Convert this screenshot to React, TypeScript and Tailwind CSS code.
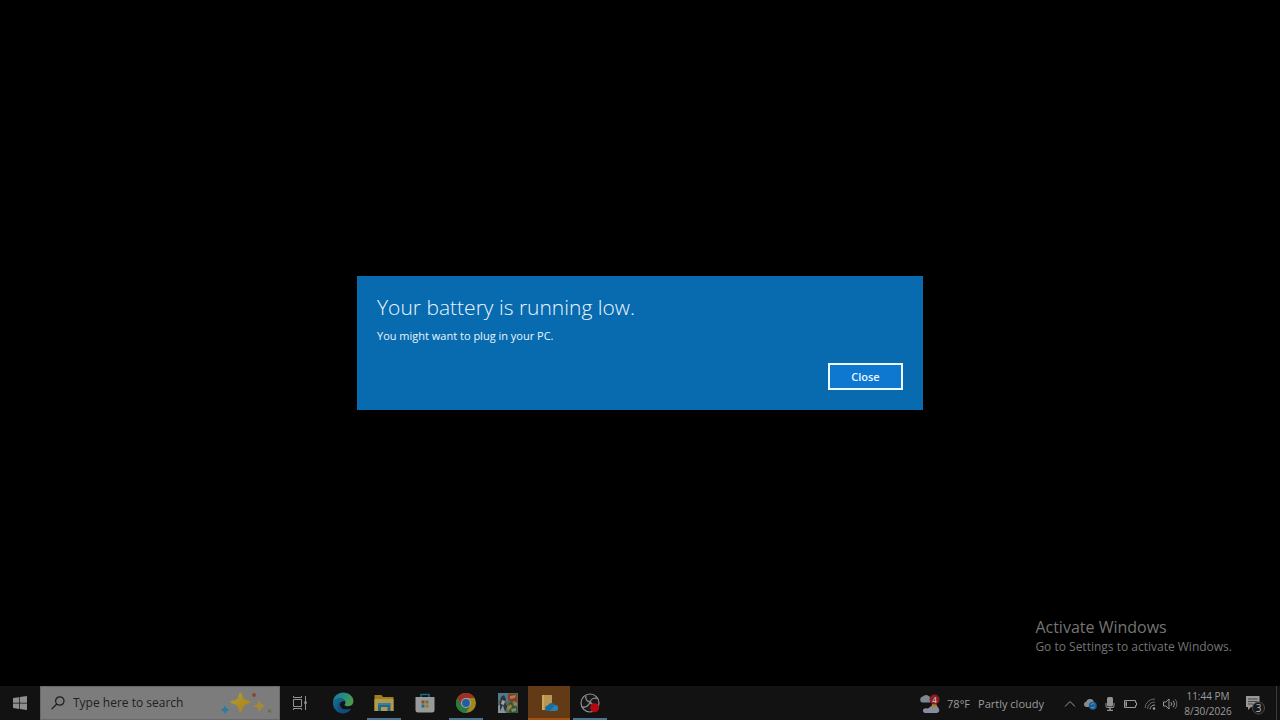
import type { ReactNode } from 'react';

function StartIcon() {
  return (
    <svg viewBox="0 0 14 14" className="h-3.5 w-3.5" fill="#8e8e8e">
      <path d="M0 2.1 6.1 1.2V6.7H0zM6.8 1.1 14 0V6.7H6.8zM0 7.4H6.1V12.9L0 12zM6.8 7.4H14V14L6.8 13z" />
    </svg>
  );
}

function SearchIcon() {
  return (
    <svg viewBox="0 0 14 14" className="h-3.5 w-3.5 shrink-0" fill="none" stroke="#1a1a1a" strokeWidth="1.2">
      <circle cx="8.8" cy="5" r="4.2" />
      <path d="M5.8 8 .6 13.2" />
    </svg>
  );
}

function Sparkles() {
  return (
    <svg viewBox="0 0 52 24" className="h-6 w-[52px] shrink-0">
      <defs>
        <linearGradient id="gold" x1="0" y1="0" x2="1" y2="1">
          <stop offset="0" stopColor="#b39a3a" />
          <stop offset="1" stopColor="#a8850c" />
        </linearGradient>
      </defs>
      <path d="M19.500 1.500c1.800 0 1.800 5 3.500 6.500s6.500 1.500 6.500 3.200-4.800 1.700-6.500 3.200-1.700 6.600-3.500 6.600-1.800-5.100-3.500-6.600-6.500-1.500-6.500-3.200 4.800-1.700 6.500-3.200 1.700-6.500 3.500-6.500Z" fill="url(#gold)" />
      <path d="M38.500 9.500c1 0 1 2.700 1.900 3.500s3.300 1 3.300 2-2.400 1.200-3.300 2-.9 3.500-1.900 3.500-1-2.700-1.900-3.500-3.300-1-3.300-2 2.400-1.200 3.300-2 .9-3.500 1.900-3.500Z" fill="#a38a35" />
      <path d="M4 15c.8 0 .9 1.700 1.600 2.300s2.400.7 2.400 1.500-1.700.9-2.400 1.500S4.800 22.500 4 22.500s-.9-1.600-1.600-2.200S0 19.600 0 18.800s1.700-.9 2.400-1.500S3.200 15 4 15Z" fill="#257d9f" />
      <circle cx="33" cy="4" r="1.900" fill="#8c452c" />
      <circle cx="48.500" cy="20" r="1.800" fill="#6c7048" />
    </svg>
  );
}

function TaskViewIcon() {
  return (
    <svg viewBox="0 0 14 14" className="h-3.5 w-3.5" fill="none" stroke="#929292" strokeWidth="1">
      <path d="M.5 3.500h8v7h-8zM.5 0v1.500h8V0M.5 14v-1.500h8V14M12.500 0v14" />
      <path d="M11.200 5.500h2.600v2.300h-2.600z" fill="#929292" stroke="none" />
    </svg>
  );
}

function EdgeIcon() {
  return (
    <svg viewBox="0 0 22 22" className="h-[22px] w-[22px]">
      <defs>
        <linearGradient id="edgeTop" x1="0" y1="0" x2="1" y2="0.500">
          <stop offset="0" stopColor="#1c7791" />
          <stop offset="0.500" stopColor="#248b88" />
          <stop offset="1" stopColor="#4b9b4b" />
        </linearGradient>
        <linearGradient id="edgeLow" x1="0" y1="0" x2="1" y2="1">
          <stop offset="0" stopColor="#167097" />
          <stop offset="1" stopColor="#123f70" />
        </linearGradient>
      </defs>
      <path d="M1 10C1.500 4 6 .6 11.200.6c6 0 10.200 4.200 10.200 8.500 0 3.400-2.500 5.200-5.300 5.200-2.200 0-3.600-.8-3.600-1.600 0-.5.9-.9.900-2.300 0-1.900-2.200-3.900-5.400-3.900C4.800 6.500 2.200 8 1 10Z" fill="url(#edgeTop)" />
      <path d="M1 10c1.100-2.200 3.900-3.700 7.100-3.500 2.900.2 4.400 1.600 4.900 2.900-4-1-5.500 2-4.800 4.500.9 3.300 5 4.800 10.900 2.800-1.700 2.900-4.700 4.700-8.100 4.700C5.300 21.400.4 16.400 1 10Z" fill="url(#edgeLow)" />
      <path d="M8.200 13.900c.9 3.300 5 4.800 10.900 2.800-2.600 3.400-6.300 4.300-9 3.500-3.800-1-5.500-5.200-3.600-8.900.5-1 1.200-1.800 2.300-2.200-.9 1.600-1 3.200-.6 4.800Z" fill="#124b80" />
    </svg>
  );
}

function ExplorerIcon() {
  return (
    <svg viewBox="0 0 20 18" className="h-[18px] w-5">
      <path d="M.5 1h7l1.500 2h10.500v14H.5z" fill="#a27d20" />
      <path d="M.5 5h19v12H.5z" fill="#b39a4b" />
      <path d="M4 9h12.500v8h-3v-4H7v4H4z" fill="#23688d" />
      <path d="M4 9h12.500v2H4z" fill="#3480a5" />
    </svg>
  );
}

function StoreIcon() {
  return (
    <svg viewBox="0 0 20 20" className="h-5 w-5">
      <path d="M6 5V1.500h8V5" fill="none" stroke="#1b6c81" strokeWidth="1.500" />
      <path d="M.5 4h19v13a2.500 2.500 0 0 1-2.500 2.500H3A2.500 2.500 0 0 1 .5 17z" fill="#999999" />
      <path d="M6.500 7.500h3v3h-3z" fill="#8c492f" />
      <path d="M10.500 7.500h3v3h-3z" fill="#627a2f" />
      <path d="M6.500 11.500h3v3h-3z" fill="#246a91" />
      <path d="M10.500 11.500h3v3h-3z" fill="#9b7b21" />
    </svg>
  );
}

function ChromeIcon() {
  return (
    <svg viewBox="0 0 20 20" className="h-5 w-5">
      <circle cx="10" cy="10" r="10" fill="#a2871b" />
      <path d="M10 10V5h8.700A10 10 0 0 0 1.300 5l4.400 7.500z" fill="#9b3028" />
      <path d="M1.300 5A10 10 0 0 0 10 20l4.300-7.500L10 10 5.700 12.500z" fill="#277c3d" />
      <circle cx="10" cy="10" r="5" fill="#a7a7a7" />
      <circle cx="10" cy="10" r="3.900" fill="#245ca0" />
    </svg>
  );
}

function GameIcon() {
  return (
    <svg viewBox="0 0 20 20" className="h-5 w-5">
      <path d="M0 0h20v20H0z" fill="#56645f" />
      <path d="M0 0h10v8L6 10 0 7z" fill="#52798b" />
      <path d="M10 1h9v7l-6 1-3-3z" fill="#8c392b" />
      <path d="m12 3 6-1-1 3-5 1z" fill="#a58443" />
      <path d="m0 13 5-3 3 10H0z" fill="#899297" />
      <path d="m3 4 3-2 2 4-1 3 2 4-2 6-2-7-3 6V9z" fill="#2c363d" />
      <path d="m4 7 3 1-1 4-3-1z" fill="#a6a4a0" />
      <path d="m11 10 3-1 1 4 4 1v6h-8z" fill="#35532d" />
      <path d="m9 14 4-3 1 3-4 4zM15 8l4 2v3l-3-1z" fill="#9a853e" />
      <path d="m13 16 5-1v3l-4 1z" fill="#7d8a70" />
    </svg>
  );
}

function CloudFolderIcon() {
  return (
    <svg viewBox="0 0 18 18" className="h-[18px] w-[18px]">
      <path d="M2 1h10v15H2z" fill="#b99752" />
      <path d="M2 1h2v15H2z" fill="#cca85d" />
      <path d="M8 17a2.800 2.800 0 0 1-.2-5.600A4 4 0 0 1 15 11a3 3 0 0 1 .5 6z" fill="#196b9c" />
      <path d="M9.500 17 15 11a3 3 0 0 1 .5 6z" fill="#2881b1" />
    </svg>
  );
}

function RecorderIcon() {
  return (
    <svg viewBox="0 0 20 20" className="h-5 w-5">
      <circle cx="10" cy="10" r="9" fill="#171717" stroke="#939393" strokeWidth="1.200" />
      <path d="M6 2.500C5 6 7 8.700 10.200 9M17 5.500c-3.200-.9-6 .7-6.800 3.500M2 14c3.800.8 6.500-1.200 8.200-5M10.200 9l3.500 4" fill="none" stroke="#858585" strokeWidth="1.400" />
      <circle cx="14.700" cy="14.700" r="4.500" fill="#b50711" />
    </svg>
  );
}

function WeatherIcon() {
  return (
    <svg viewBox="0 0 22 20" className="h-5 w-[22px] shrink-0">
      <path d="M13 8.500c1 4-3.500 7.500-9 6.500C6 20.500 17 20.500 18.500 13.500 18.500 10.500 16 8.500 13 8.500Z" fill="#b07a20" />
      <path d="M3.500 8.500a3 3 0 0 1 .2-5.900A4.500 4.500 0 0 1 11.500 5v3.500z" fill="#7e8791" />
      <path d="M5.500 19a2.500 2.500 0 0 1 .6-4.800c1.500-.2 2.300.3 3 .8a5 5 0 0 1 6.500-2.200 3.300 3.300 0 0 1 2.500 6.200z" fill="#858c9d" />
      <circle cx="15.500" cy="5.500" r="5" fill="#8d1d20" />
      <text x="15.500" y="8.500" textAnchor="middle" fill="#c5b5b5" className="font-['Open_Sans',sans-serif] text-[8px] font-semibold">4</text>
    </svg>
  );
}

function ChevronIcon() {
  return (
    <svg viewBox="0 0 12 8" className="h-2 w-3" fill="none" stroke="#9b9b9b" strokeWidth="1">
      <path d="m1 6.500 5-5 5 5" />
    </svg>
  );
}

function CloudSyncIcon() {
  return (
    <svg viewBox="0 0 14 12" className="h-3 w-3.5">
      <path d="M3 9a2.700 2.700 0 0 1 .2-5.300A4 4 0 0 1 11 4.500L9 9z" fill="#8b8b8b" />
      <circle cx="9.800" cy="7.700" r="4" fill="#12609a" />
      <path d="M8 7a2 2 0 0 1 3.500-.6M11.600 8.500a2 2 0 0 1-3.500.5" fill="none" stroke="#89a7bf" strokeWidth=".8" />
    </svg>
  );
}

function MicIcon() {
  return (
    <svg viewBox="0 0 10 14" className="h-3.5 w-2.5" fill="#919191">
      <rect x="2" y="0" width="6" height="9.500" rx="1.500" />
      <path d="M.5 6v3a2 2 0 0 0 2 2h1.700v1.700H2V14h6v-1.300H5.800V11h1.700a2 2 0 0 0 2-2V6h-1v3a1 1 0 0 1-1 1h-5a1 1 0 0 1-1-1V6z" />
    </svg>
  );
}

function BatteryIcon() {
  return (
    <svg viewBox="0 0 14 8" className="h-2 w-3.5" fill="none" stroke="#999999" strokeWidth="1">
      <path d="M1.500.5h11v2h1v3h-1v2h-11z" />
      <path d="M2.500 1.500h1.500v5H2.500z" fill="#999999" stroke="none" />
    </svg>
  );
}

function WifiIcon() {
  return (
    <svg viewBox="0 0 12 12" className="h-3 w-3" fill="none" strokeWidth="1">
      <path d="M1 10A9.500 9.500 0 0 1 11 1M3.500 11A7 7 0 0 1 11 4" stroke="#686868" />
      <path d="M6 11.300A5 5 0 0 1 11 7" stroke="#999999" />
      <circle cx="10" cy="10.500" r="1.200" fill="#a0a0a0" />
    </svg>
  );
}

function SpeakerIcon() {
  return (
    <svg viewBox="0 0 15 12" className="h-3 w-[15px]" fill="none" stroke="#999999" strokeWidth="1">
      <path d="M.5 4h2.300L6 1v10L2.800 8H.5z" />
      <path d="M8 4.200a2.600 2.600 0 0 1 0 3.600M10 2.700a4.700 4.700 0 0 1 0 6.600" />
      <path d="M12 1.200a7 7 0 0 1 0 9.600" stroke="#696969" />
    </svg>
  );
}

function NotificationIcon() {
  return (
    <svg viewBox="0 0 22 22" className="h-[22px] w-[22px]">
      <path d="M1 3h13.500v11H6l-3 3v-3H1z" fill="#989898" />
      <path d="M3 6h9.500M3 8.500h9.500M3 11h5" stroke="#464646" strokeWidth="1" />
      <circle cx="13.500" cy="15" r="6" fill="#181818" stroke="#4b4b4b" />
      <text x="13.500" y="18.500" textAnchor="middle" fill="#b5b5b5" className="font-['Open_Sans',sans-serif] text-[10px]">3</text>
    </svg>
  );
}

type AppButtonProps = { label: string; open?: boolean; attention?: boolean; children: ReactNode };

function AppButton({ label, open, attention, children }: AppButtonProps) {
  return (
    <button
      type="button"
      aria-label={label}
      className={
        attention
          ? 'flex flex-1 flex-col items-center bg-[#633a16] pt-0.5'
          : 'flex flex-1 flex-col items-center pt-0.5'
      }
    >
      <span className="flex flex-1 items-center justify-center">{children}</span>
      <span
        className={
          attention ? 'h-0.5 w-full bg-[#a24f12]' : open ? 'h-0.5 w-[34px] bg-[#4d748c]' : 'h-0.5 w-full'
        }
      />
    </button>
  );
}

function TrayButton({ label, children }: { label: string; children: ReactNode }) {
  return (
    <button type="button" aria-label={label} className="flex w-5 items-center justify-center">
      {children}
    </button>
  );
}

function BatteryDialog() {
  return (
    <section
      role="alertdialog"
      aria-labelledby="battery-title"
      aria-describedby="battery-text"
      className="flex w-full max-w-[566px] flex-col bg-[#086baf] px-5 pt-4 pb-5 text-[#e8f6ff]"
    >
      <h1 id="battery-title" className="text-[21px] leading-[30px] font-light">
        Your battery is running low.
      </h1>
      <p id="battery-text" className="mt-1.5 text-[11px] leading-4">
        You might want to plug in your PC.
      </p>
      <button
        type="button"
        className="mt-[19px] h-[27px] w-[75px] self-end border-2 border-[#eefaff] bg-[#0e78d1] text-[11px] leading-4 font-semibold"
      >
        Close
      </button>
    </section>
  );
}

function Taskbar() {
  return (
    <footer className="flex h-[34px] shrink-0 bg-[#121212] text-[#9c9c9c]">
      <button type="button" aria-label="Start" className="flex w-10 items-center justify-center">
        <StartIcon />
      </button>
      <label className="flex w-60 items-center border border-[#696969] bg-[#7c7c7c] pr-1.5 pl-[10px]">
        <SearchIcon />
        <input
          type="search"
          aria-label="Type here to search"
          placeholder="Type here to search"
          className="ml-2 min-w-0 flex-1 bg-transparent text-[12px] leading-5 text-[#202020] outline-none placeholder:text-[#202020]"
        />
        <Sparkles />
      </label>
      <button type="button" aria-label="Task View" className="mr-[3px] flex w-[39px] items-center justify-center">
        <TaskViewIcon />
      </button>
      <nav aria-label="Apps" className="flex w-[289px]">
        <AppButton label="Microsoft Edge"><EdgeIcon /></AppButton>
        <AppButton label="File Explorer" open><ExplorerIcon /></AppButton>
        <AppButton label="Microsoft Store"><StoreIcon /></AppButton>
        <AppButton label="Google Chrome" open><ChromeIcon /></AppButton>
        <AppButton label="Game"><GameIcon /></AppButton>
        <AppButton label="OneDrive" attention><CloudFolderIcon /></AppButton>
        <AppButton label="Recorder" open><RecorderIcon /></AppButton>
      </nav>
      <button type="button" className="mr-4 ml-auto flex items-center gap-1.5 pt-0.5 text-[11px] leading-4 whitespace-nowrap">
        <WeatherIcon />
        <span className="flex gap-2">
          <span>78°F</span>
          <span>Partly cloudy</span>
        </span>
      </button>
      <div className="flex pt-0.5">
        <TrayButton label="Show hidden icons"><ChevronIcon /></TrayButton>
        <TrayButton label="OneDrive sync"><CloudSyncIcon /></TrayButton>
        <TrayButton label="Microphone"><MicIcon /></TrayButton>
        <TrayButton label="Battery"><BatteryIcon /></TrayButton>
        <TrayButton label="Network"><WifiIcon /></TrayButton>
        <TrayButton label="Volume"><SpeakerIcon /></TrayButton>
      </div>
      <button type="button" className="flex w-14 flex-col items-center justify-center pt-0.5 text-[10px] leading-[15px] whitespace-nowrap">
        <time>11:44 PM</time>
        <time>8/30/2026</time>
      </button>
      <button type="button" aria-label="Notifications" className="flex w-10 items-center justify-center pt-0.5">
        <NotificationIcon />
      </button>
      <button type="button" aria-label="Show desktop" className="w-1 border-l border-[#3a3a3a]" />
    </footer>
  );
}

export default function App() {
  return (
    <div className="relative flex min-h-screen flex-col bg-black font-['Open_Sans','Noto_Sans',sans-serif]">
      <main className="flex flex-1 items-center justify-center">
        <BatteryDialog />
      </main>
      <aside className="absolute right-12 bottom-[65px] text-[#747474]">
        <p className="text-[16px] leading-6">Activate Windows</p>
        <p className="text-[12px] leading-4">Go to Settings to activate Windows.</p>
      </aside>
      <Taskbar />
    </div>
  );
}
